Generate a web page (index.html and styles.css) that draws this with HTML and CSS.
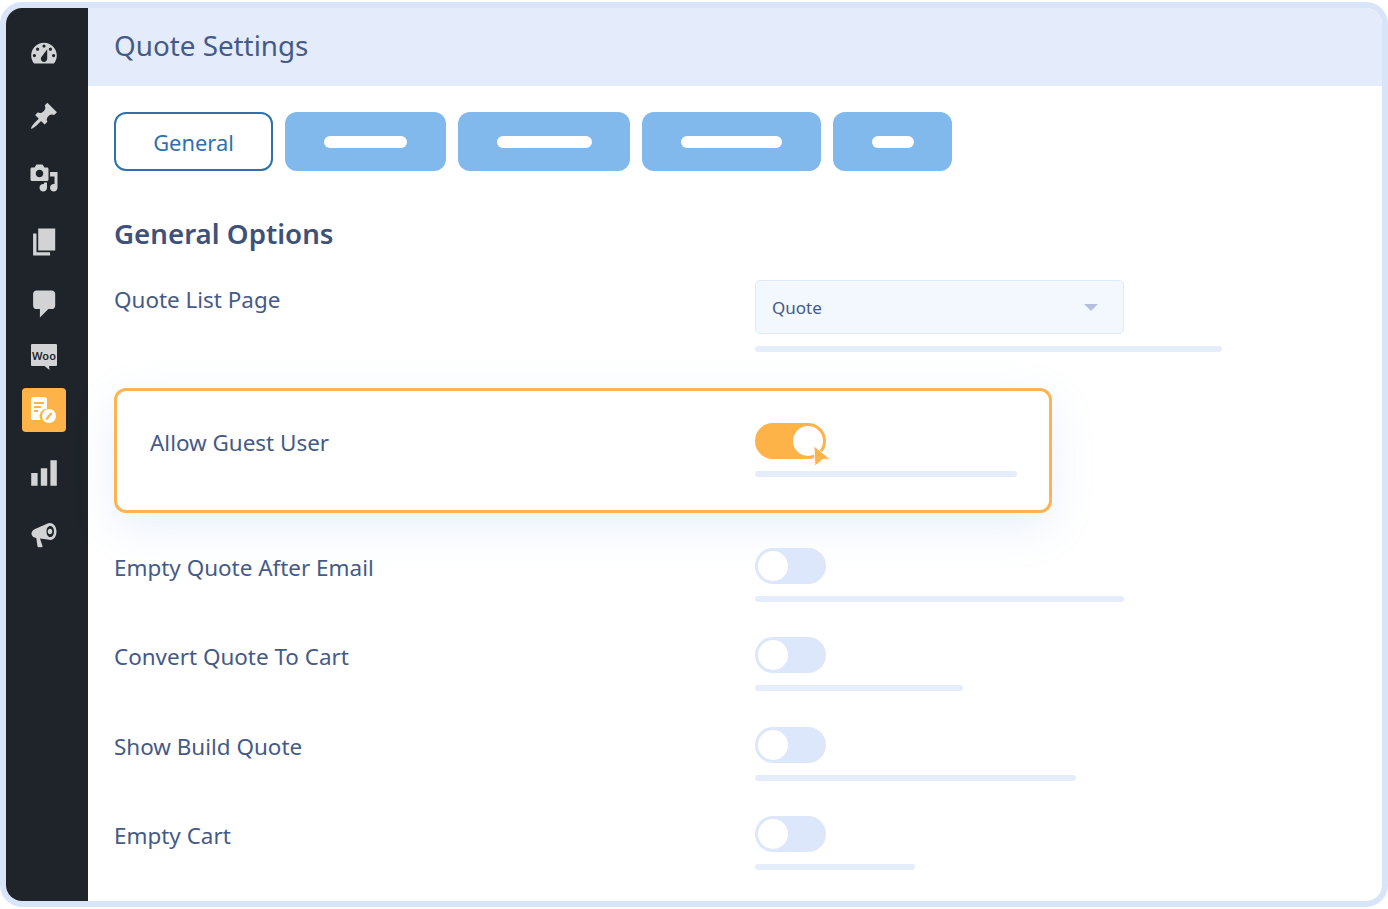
FILE: index.html
```html
<!DOCTYPE html>
<html lang="en">
<head>
<meta charset="utf-8">
<title>Quote Settings</title>
<link rel="stylesheet" href="styles.css">
</head>
<body>
<div class="frame">
  <nav class="sidebar">
    <div class="nav-item"><svg class="icon i-dash" viewBox="0 0 20 20"><path fill-rule="evenodd" d="M3.76 16h12.48c1.1-1.37 1.76-3.11 1.76-5 0-4.42-3.58-8-8-8s-8 3.58-8 8c0 1.89.66 3.63 1.76 5zM10 4c.55 0 1 .45 1 1s-.45 1-1 1-1-.45-1-1 .45-1 1-1zM6 6c.55 0 1 .45 1 1s-.45 1-1 1-1-.45-1-1 .45-1 1-1zm8 0c.55 0 1 .45 1 1s-.45 1-1 1-1-.45-1-1 .45-1 1-1zm-5.37 5.55L12 7v6c0 1.1-.9 2-2 2s-2-.9-2-2c0-.57.24-1.08.63-1.45zM4 10c.55 0 1 .45 1 1s-.45 1-1 1-1-.45-1-1 .45-1 1-1zm12 0c.55 0 1 .45 1 1s-.45 1-1 1-1-.45-1-1 .45-1 1-1z"/></svg></div>
    <div class="nav-item"><svg class="icon i-pin" viewBox="0 0 20 20"><path d="M10.44 3.02l1.82-1.82 6.36 6.35-1.83 1.82c-1.05-.68-2.48-.57-3.41.36l-.75.75c-.92.93-1.04 2.35-.35 3.41l-1.83 1.82-2.41-2.41-2.8 2.79c-.42.42-3.38 2.71-3.8 2.29s1.86-3.39 2.28-3.81l2.79-2.79L4.1 9.36l1.83-1.82c1.05.69 2.48.57 3.4-.36l.75-.75c.93-.92 1.05-2.35.36-3.41z"/></svg></div>
    <div class="nav-item"><svg class="icon i-media" viewBox="0 0 20 20"><path d="M13 11V4c0-.55-.45-1-1-1h-1.67L9 1H5L3.67 3H2c-.55 0-1 .45-1 1v7c0 .55.45 1 1 1h10c.55 0 1-.45 1-1zM7 4.5c1.38 0 2.5 1.12 2.5 2.5S8.38 9.5 7 9.5 4.5 8.38 4.5 7 5.62 4.5 7 4.5zM14 6h5v10.5c0 1.38-1.12 2.5-2.5 2.5S14 17.88 14 16.5s1.12-2.5 2.5-2.5c.17 0 .34.02.5.05V9h-3V6zm-4 8.05V13h2v3.5c0 1.38-1.12 2.5-2.5 2.5S7 17.88 7 16.5 8.12 14 9.5 14c.17 0 .34.02.5.05z"/></svg></div>
    <div class="nav-item"><svg class="icon i-page" viewBox="0 0 20 20"><path d="M6 15V2h10v13H6zm-1 1h8v2H3V5h2v11z"/></svg></div>
    <div class="nav-item"><svg class="icon i-page" viewBox="0 0 20 20"><path d="M5 2h9c1.1 0 2 .9 2 2v7c0 1.1-.9 2-2 2h-2l-5 5v-5H5c-1.1 0-2-.9-2-2V4c0-1.1.9-2 2-2z"/></svg></div>
    <div class="nav-item nav-woo"><svg class="icon i-woo" viewBox="0 0 26 26"><path class="woo-bubble" d="M1 0h24a1 1 0 0 1 1 1v20a1 1 0 0 1-1 1h-7l.5 4-5-4H1a1 1 0 0 1-1-1V1a1 1 0 0 1 1-1z"/><text class="woo-text" x="13" y="15.500" text-anchor="middle">Woo</text></svg></div>
    <div class="nav-item nav-active"><svg class="icon i-quote" viewBox="0 0 26 26"><path d="M2.500 0h11a2.500 2.500 0 0 1 2.500 2.500v9.300a7.500 7.500 0 0 0-6.400 11.200H2.500A2.500 2.500 0 0 1 0 20.500v-18A2.500 2.500 0 0 1 2.500 0z"/><rect class="q-line" x="3" y="5" width="10" height="2"/><rect class="q-line" x="3" y="9" width="7" height="2"/><rect class="q-line" x="3" y="13" width="4" height="2"/><circle cx="18" cy="19" r="7"/><path class="q-slash" d="M15.800 21.800l4.200-5.200"/></svg></div>
    <div class="nav-item nav-stats"><svg class="icon i-stats" viewBox="0 0 20 20"><path d="M18 18V2h-4v16h4zm-6 0V7H8v11h4zm-6 0v-8H2v8h4z"/></svg></div>
    <div class="nav-item nav-mega"><svg class="icon i-mega" viewBox="0 0 26 26"><path fill-rule="evenodd" d="M19 1c3.800 0 6.500 4 6.500 8.500S23 18 19.500 18c-.5 0-1-.1-1.400-.2L9 16.500l2.500 7.500c.2.600-.2 1.200-.8 1.200H7.500c-.5 0-.9-.3-1-.8L5.300 16C3 15.800.5 14.200.5 11.500c0-2 1.500-3.500 3-4.300L15.500 2c1-.6 2.200-1 3.500-1zM19.200 4c-2.200 0-3.700 2.400-3.700 5.400s1.500 5.600 3.800 5.600 3.700-2.600 3.700-5.600S21.500 4 19.200 4zm-.2 2.800c1.300 0 2.300 1.200 2.300 2.700s-1 2.700-2.300 2.700-2.300-1.200-2.300-2.700 1-2.700 2.300-2.700z"/></svg></div>
  </nav>
  <main class="main">
    <header class="page-header"><h1 class="page-title">Quote Settings</h1></header>
    <div class="content">
      <div class="tabs">
        <button class="tab tab-current">General</button>
        <div class="tab tab-w1"><span class="tab-bar bar-83"></span></div>
        <div class="tab tab-w2"><span class="tab-bar bar-95"></span></div>
        <div class="tab tab-w3"><span class="tab-bar bar-101"></span></div>
        <div class="tab tab-w4"><span class="tab-bar bar-42"></span></div>
      </div>
      <h2 class="section-title">General Options</h2>
      <div class="row row-select">
        <div class="label">Quote List Page</div>
        <div class="control">
          <div class="select"><span>Quote</span><span class="caret"></span></div>
          <div class="hint hint-467"></div>
        </div>
      </div>
      <div class="row row-highlight">
        <div class="label">Allow Guest User</div>
        <div class="control">
          <div class="toggle toggle-on"><span class="knob"></span>
            <svg class="cursor" viewBox="0 0 18 22"><path d="M1 1l16 13-7.500.5L2 21z"/></svg>
          </div>
          <div class="hint hint-262"></div>
        </div>
      </div>
      <div class="row row-plain">
        <div class="label">Empty Quote After Email</div>
        <div class="control"><div class="toggle"><span class="knob"></span></div><div class="hint hint-369"></div></div>
      </div>
      <div class="row row-plain">
        <div class="label">Convert Quote To Cart</div>
        <div class="control"><div class="toggle"><span class="knob"></span></div><div class="hint hint-208"></div></div>
      </div>
      <div class="row row-plain">
        <div class="label">Show Build Quote</div>
        <div class="control"><div class="toggle"><span class="knob"></span></div><div class="hint hint-321"></div></div>
      </div>
      <div class="row row-plain">
        <div class="label">Empty Cart</div>
        <div class="control"><div class="toggle"><span class="knob"></span></div><div class="hint hint-160"></div></div>
      </div>
    </div>
  </main>
</div>
</body>
</html>
```
FILE: styles.css
```css
* { box-sizing: border-box; }
html, body { margin: 0; padding: 0; background: #fff; }
body { font-family: "Noto Sans", "Open Sans", sans-serif; color: #455a86; overflow: hidden; }

.frame {
  display: flex;
  width: 1388px;
  height: 905px;
  margin-top: 2px;
  border: 6px solid #d8e4f8;
  border-radius: 22px;
  overflow: hidden;
  background: #fff;
}

.sidebar {
  flex: 0 0 81.500px;
  display: flex;
  flex-direction: column;
  align-items: flex-start;
  gap: 18px;
  padding: 24px 0 0 16px;
  background: #1e2429;
}
.nav-item {
  flex: 0 0 44px;
  width: 44px;
  display: flex;
  align-items: center;
  justify-content: center;
  border-radius: 4px;
}
.nav-woo { margin-top: -7px; }
.nav-active { margin-top: -9px; background: #fdb347; }
.nav-stats { margin-top: 1px; }
.nav-mega { margin-top: -1px; }

.icon { display: block; fill: #d2d3d5; }
.i-dash { width: 32px; height: 32px; }
.i-pin { width: 30px; height: 30px; }
.i-media { width: 30px; height: 30px; }
.i-page { width: 34px; height: 34px; margin: 3px 0 0 2px; }
.i-stats { width: 32px; height: 32px; }
.i-woo { width: 26px; height: 26px; }
.i-mega { width: 26px; height: 26px; margin-top: 2px; }
.i-quote { width: 26px; height: 26px; fill: #fff; }
.q-line { fill: #fdb347; }
.q-slash { stroke: #fdb347; stroke-width: 2.200; stroke-linecap: round; fill: none; }
.woo-text {
  font-family: "Noto Sans", sans-serif;
  font-size: 11px;
  font-weight: 600;
  fill: #1e2429;
}

.main { flex: 1; min-width: 0; display: flex; flex-direction: column; }
.page-header {
  height: 78px;
  display: flex;
  align-items: center;
  padding: 0 0 4px 26.500px;
  background: #e4ecfb;
}
.page-title { margin: 0; font-size: 27.800px; font-weight: 400; color: #455a86; }

.content { padding: 26px 0 0 26.500px; }
.tabs { display: flex; gap: 12px; }
.tab {
  height: 59px;
  border-radius: 12px;
  background: #81b9ec;
  display: flex;
  align-items: center;
  justify-content: center;
}
.tab-current {
  width: 159px;
  padding: 1px 0 0;
  background: #fff;
  border: 2px solid #2f71a8;
  font: 400 21.900px "Noto Sans", sans-serif;
  color: #2f71a8;
}
.tab-w1 { width: 161px; }
.tab-w2 { width: 172px; }
.tab-w3 { width: 179px; }
.tab-w4 { width: 119px; }
.tab-bar { display: block; height: 12px; border-radius: 6px; background: #fff; }
.bar-83 { width: 83px; }
.bar-95 { width: 95px; }
.bar-101 { width: 101px; }
.bar-42 { width: 42px; }

.section-title { margin: 42px 0 0; font-size: 27.700px; line-height: 40px; font-weight: 600; color: #3d5179; }

.row { display: flex; }
.label { flex: 0 0 641px; font-size: 22.450px; line-height: 32px; color: #455a86; }
.control { flex: 1; display: flex; flex-direction: column; align-items: flex-start; }

.row-select { margin-top: 27px; }
.row-select .label { padding-top: 4px; }
.select {
  width: 369px;
  height: 54px;
  display: flex;
  align-items: center;
  justify-content: space-between;
  padding: 0 25px 0 16px;
  background: #f3f7fe;
  border: 1px solid #e1eafa;
  border-radius: 5px;
  font-size: 17px;
  color: #455a86;
}
.caret {
  width: 0;
  height: 0;
  border-left: 7.500px solid transparent;
  border-right: 7.500px solid transparent;
  border-top: 7px solid #b4c0dd;
}
.hint { height: 6px; margin-top: 12px; border-radius: 3px; background: #e6edfa; }
.hint-467 { width: 467px; }
.hint-262 { width: 262px; }
.hint-369 { width: 369px; }
.hint-208 { width: 208px; }
.hint-321 { width: 321px; }
.hint-160 { width: 160px; }

.row-highlight {
  width: 938px;
  height: 125px;
  margin-top: 36px;
  padding: 32px 0 0 33px;
  background: #fff;
  border: 3px solid #fab552;
  border-radius: 12px;
  box-shadow: 0 14px 44px rgba(120, 160, 230, 0.16);
}
.row-highlight .label { flex-basis: 605px; line-height: 40px; }
.row-highlight .control { flex: 0 0 auto; }

.row-plain { margin-top: 35.300px; height: 54px; }
.row-highlight + .row-plain { margin-top: 35px; }
.row-plain .label { padding-top: 4px; }

.toggle {
  position: relative;
  width: 71px;
  height: 36px;
  padding: 3px;
  border-radius: 18px;
  background: #dde7fb;
}
.knob { display: block; width: 30px; height: 30px; border-radius: 50%; background: #fff; }
.toggle-on { background: #fdb347; }
.toggle-on .knob { margin-left: 35px; }
.cursor {
  position: absolute;
  left: 58px;
  top: 22px;
  width: 18px;
  height: 22px;
  fill: #fdb347;
  stroke: #fff6e8;
  stroke-width: 1;
}
```
